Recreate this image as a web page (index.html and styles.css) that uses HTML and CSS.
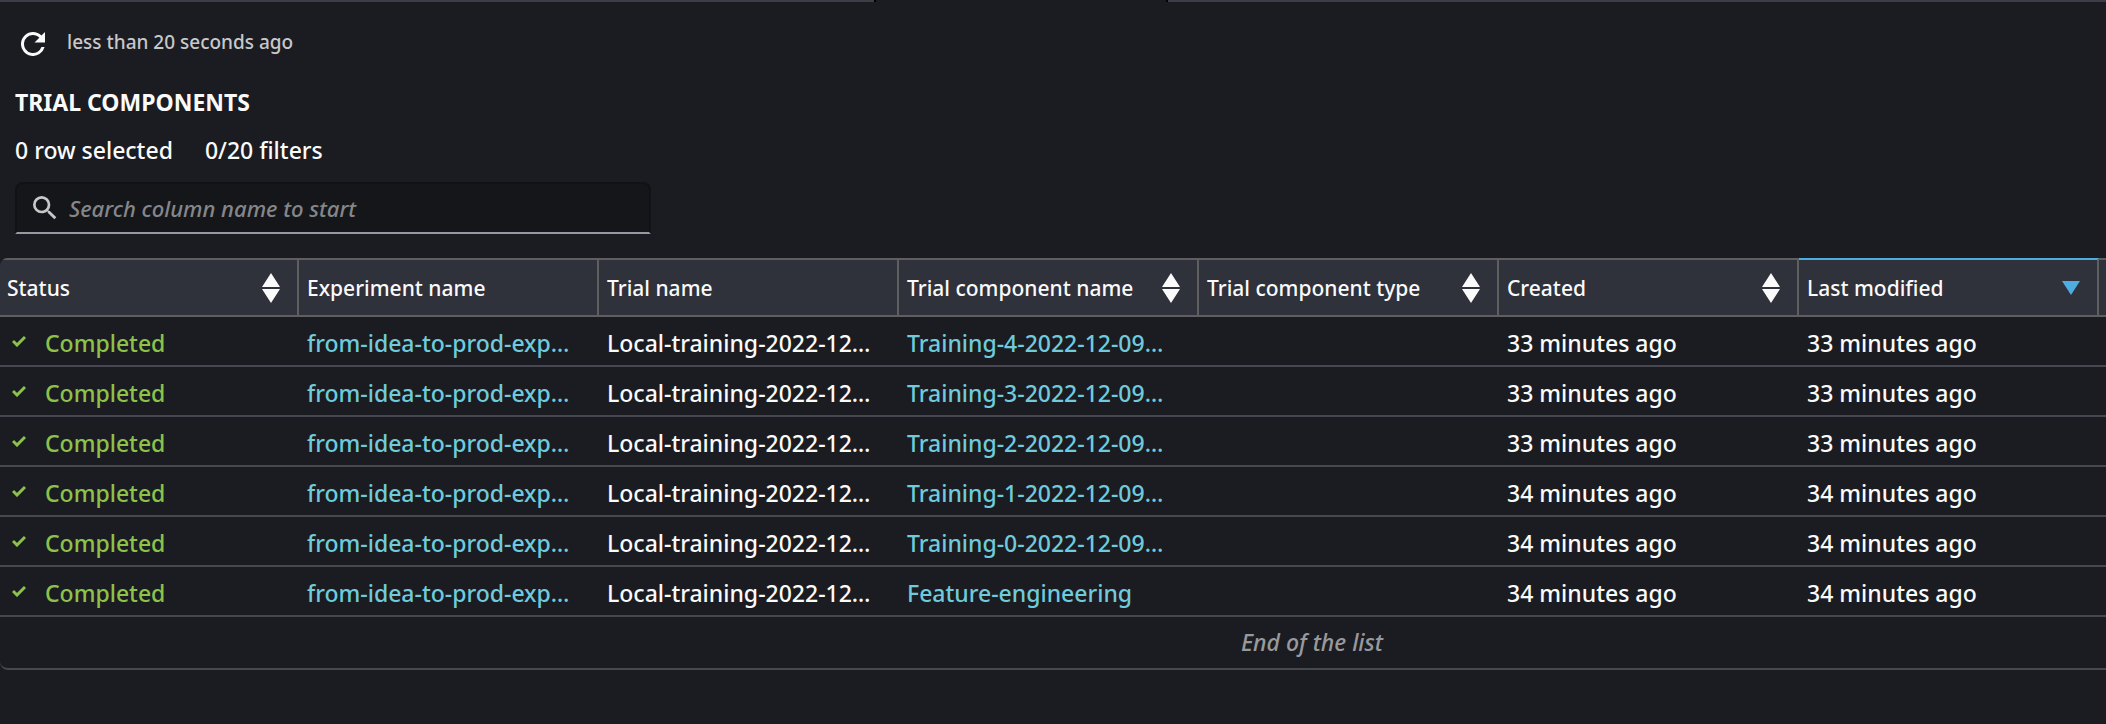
FILE: index.html
```html
<!DOCTYPE html>
<html lang="en">
  <head>
    <meta charset="UTF-8" />
    <meta name="viewport" content="width=device-width, initial-scale=1.0" />
    <title>Trial components</title>
    <link rel="stylesheet" href="styles.css">
  </head>
  <body>
    <div class="tab-edge"><span class="tab-gap"></span></div>

    <main>
      <div class="refresh">
        <button type="button" class="refresh-button" aria-label="Refresh">
          <svg viewBox="4 4 16 16" width="24" height="24">
            <path fill="currentColor" d="M17.65 6.35A7.96 7.96 0 0 0 12 4a8 8 0 1 0 7.73 10h-2.08A6 6 0 1 1 12 6c1.66 0 3.14.69 4.22 1.78L13 11h7V4z" />
          </svg>
        </button>
        <span class="refresh-time">less than 20 seconds ago</span>
      </div>

      <h1>TRIAL COMPONENTS</h1>

      <div class="counts">
        <span>0 row selected</span>
        <span>0/20 filters</span>
      </div>

      <label class="search">
        <svg viewBox="3 3 18 18" width="24" height="24" aria-hidden="true">
          <path fill="currentColor" d="M15.5 14h-.79l-.28-.27A6.47 6.47 0 0 0 16 9.5 6.5 6.5 0 1 0 9.5 16c1.61 0 3.09-.59 4.23-1.57l.27.28v.79l5 4.99L20.49 19zm-6 0a4.5 4.5 0 1 1 0-9 4.5 4.5 0 0 1 0 9z" />
        </svg>
        <input type="text" placeholder="Search column name to start" aria-label="Search column name" />
      </label>
    </main>

    <svg class="symbols" width="0" height="0" aria-hidden="true">
      <symbol id="sort" viewBox="0 0 20 30">
        <path d="M10 0l9 14H1zM10 30l9-14H1z" fill="currentColor" />
      </symbol>
      <symbol id="check" viewBox="0 0 14 12">
        <path d="M1 6l4 4 8-8" fill="none" stroke="currentColor" stroke-width="3" />
      </symbol>
    </svg>

    <div class="grid">
      <table>
        <colgroup>
          <col class="col-first" />
          <col class="col" span="6" />
          <col />
        </colgroup>
        <thead>
          <tr>
            <th><div class="head">Status <button type="button" aria-label="Sort by status"><svg width="20" height="30"><use href="#sort" /></svg></button></div></th>
            <th><div class="head">Experiment name</div></th>
            <th><div class="head">Trial name</div></th>
            <th><div class="head">Trial component name <button type="button" aria-label="Sort by trial component name"><svg width="20" height="30"><use href="#sort" /></svg></button></div></th>
            <th><div class="head">Trial component type <button type="button" aria-label="Sort by trial component type"><svg width="20" height="30"><use href="#sort" /></svg></button></div></th>
            <th><div class="head">Created <button type="button" aria-label="Sort by created"><svg width="20" height="30"><use href="#sort" /></svg></button></div></th>
            <th class="sorted"><div class="head">Last modified <button type="button" aria-label="Sort by last modified"><svg width="20" height="14" viewBox="0 0 20 14"><path d="M1 0h18l-9 14z" fill="currentColor" /></svg></button></div></th>
            <th></th>
          </tr>
        </thead>
        <tbody>
          <tr>
            <td class="status"><svg width="14" height="12"><use href="#check" /></svg>Completed</td>
            <td><a href="#">from-idea-to-prod-exp…</a></td>
            <td>Local-training-2022-12…</td>
            <td><a href="#">Training-4-2022-12-09…</a></td>
            <td></td>
            <td>33 minutes ago</td>
            <td>33 minutes ago</td>
            <td></td>
          </tr>
          <tr>
            <td class="status"><svg width="14" height="12"><use href="#check" /></svg>Completed</td>
            <td><a href="#">from-idea-to-prod-exp…</a></td>
            <td>Local-training-2022-12…</td>
            <td><a href="#">Training-3-2022-12-09…</a></td>
            <td></td>
            <td>33 minutes ago</td>
            <td>33 minutes ago</td>
            <td></td>
          </tr>
          <tr>
            <td class="status"><svg width="14" height="12"><use href="#check" /></svg>Completed</td>
            <td><a href="#">from-idea-to-prod-exp…</a></td>
            <td>Local-training-2022-12…</td>
            <td><a href="#">Training-2-2022-12-09…</a></td>
            <td></td>
            <td>33 minutes ago</td>
            <td>33 minutes ago</td>
            <td></td>
          </tr>
          <tr>
            <td class="status"><svg width="14" height="12"><use href="#check" /></svg>Completed</td>
            <td><a href="#">from-idea-to-prod-exp…</a></td>
            <td>Local-training-2022-12…</td>
            <td><a href="#">Training-1-2022-12-09…</a></td>
            <td></td>
            <td>34 minutes ago</td>
            <td>34 minutes ago</td>
            <td></td>
          </tr>
          <tr>
            <td class="status"><svg width="14" height="12"><use href="#check" /></svg>Completed</td>
            <td><a href="#">from-idea-to-prod-exp…</a></td>
            <td>Local-training-2022-12…</td>
            <td><a href="#">Training-0-2022-12-09…</a></td>
            <td></td>
            <td>34 minutes ago</td>
            <td>34 minutes ago</td>
            <td></td>
          </tr>
          <tr>
            <td class="status"><svg width="14" height="12"><use href="#check" /></svg>Completed</td>
            <td><a href="#">from-idea-to-prod-exp…</a></td>
            <td>Local-training-2022-12…</td>
            <td><a href="#">Feature-engineering</a></td>
            <td></td>
            <td>34 minutes ago</td>
            <td>34 minutes ago</td>
            <td></td>
          </tr>
        </tbody>
      </table>
      <p class="end">End of the list</p>
    </div>
  </body>
</html>
```
FILE: styles.css
```css
* {
  box-sizing: border-box;
}
body {
  margin: 0;
  background: #1b1c21;
  color: #fafafa;
  font-family: "Noto Sans", sans-serif;
  font-size: 23px;
  font-weight: 500;
  overflow-x: hidden;
}
button {
  padding: 0;
  border: none;
  background: none;
  color: inherit;
  cursor: pointer;
}
svg {
  display: block;
  flex-shrink: 0;
}
.symbols {
  position: absolute;
}

/* bottom edge of the tab bar, open under the active tab */
.tab-edge {
  display: flex;
  justify-content: center;
  height: 2px;
  background: #3c3d48;
}
.tab-gap {
  width: 294px;
  margin-right: 64px;
  background: #1b1c21;
  border: solid #000;
  border-width: 0 2px;
}

main {
  padding: 0 15px;
}
.refresh {
  display: flex;
  align-items: center;
  gap: 22px;
  height: 80px;
  padding-left: 6px;
}
.refresh-button {
  padding-top: 4px;
}
.refresh-time {
  font-size: 19px;
  color: #c8c8c9;
}
h1 {
  margin: 0;
  font-size: 23px;
  line-height: 40px;
  font-weight: 700;
}
.counts {
  display: flex;
  gap: 32px;
  margin-top: 8px;
  line-height: 40px;
}
.search {
  display: flex;
  align-items: center;
  gap: 12px;
  width: 636px;
  max-width: 100%;
  height: 52px;
  margin-top: 12px;
  padding-left: 16px;
  background: #151619;
  border: 2px solid #111215;
  border-bottom-color: #9a97a5;
  border-radius: 8px 8px 0 0;
  color: #c8c8c9;
}
.search input {
  flex: 1;
  min-width: 0;
  padding: 0;
  border: none;
  outline: none;
  background: none;
  color: inherit;
  font: inherit;
  font-size: 22px;
  font-style: italic;
}
.search input::placeholder {
  color: #85868a;
  opacity: 1;
}

.grid {
  margin-top: 24px;
  border-bottom: 2px solid #464751;
  border-radius: 8px 0 0 8px;
  overflow: hidden;
}
table {
  width: 100%;
  table-layout: fixed;
  border-collapse: separate;
  border-spacing: 0;
}
.col-first {
  width: 299px;
}
.col {
  width: 300px;
}
th {
  height: 59px;
  padding: 0 0 0 8px;
  background: #2f313b;
  border: solid #5f5f60;
  border-width: 2px 2px 2px 0;
  font-size: 21px;
  font-weight: 500;
  text-align: left;
  white-space: nowrap;
}
.head {
  display: flex;
  align-items: center;
  justify-content: space-between;
  padding-right: 16px;
}
th:last-child,
td:last-child {
  padding: 0;
  border-right: none;
}
.sorted {
  border-top-color: #4dade0;
}
.sorted button {
  color: #4dade0;
}
td {
  height: 50px;
  padding: 4px 8px 0;
  border-bottom: 2px solid #464751;
  overflow: hidden;
  text-overflow: ellipsis;
  white-space: nowrap;
}
th:first-child {
  padding-left: 7px;
}
td:first-child {
  padding-left: 12px;
}
.status {
  color: #8bc34a;
}
.status svg {
  display: inline-block;
  margin-right: 19px;
  vertical-align: 5px;
}
a {
  color: #6fcbdc;
  text-decoration: none;
}
.end {
  margin: 0;
  padding-left: 518px;
  line-height: 51px;
  text-align: center;
  color: #98999d;
  font-style: italic;
}
```
